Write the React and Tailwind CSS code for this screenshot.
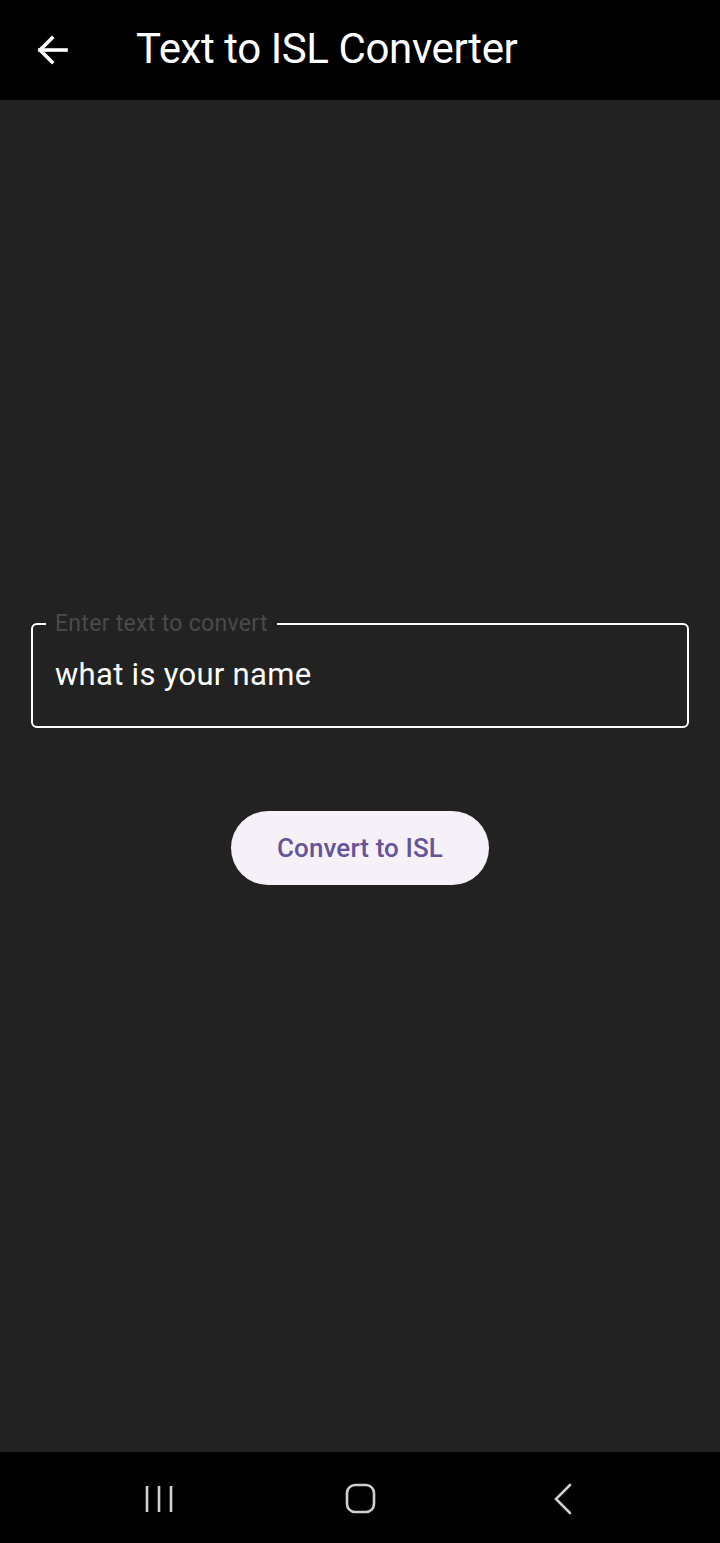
import React from 'react';

// Top app bar with back arrow and title
function AppBar() {
    return (
        <div className="h-[100px] bg-black flex items-center shrink-0">
            <div className="w-[136px] flex items-center pl-[37px]">
                <svg width="32" height="30" viewBox="0 0 32 30" fill="none" stroke="white" strokeWidth="3.6" strokeLinecap="square">
                    <path d="M3 15h26" />
                    <path d="M15 3L3 15l12 12" />
                </svg>
            </div>
            <h1 className="text-[42px] text-white leading-none tracking-[-0.4px] -mt-[3px]">Text to ISL Converter</h1>
        </div>
    );
}

// Android system navigation bar
function NavBar() {
    return (
        <div className="h-[91px] bg-black flex items-center shrink-0 pl-[145px] pt-[2px]">
            <svg width="30" height="30" viewBox="0 0 30 30" fill="none" stroke="#cfcfcf" strokeWidth="2.6">
                <path d="M2 2v26M14 2v26M26 2v26" />
            </svg>
            <svg className="ml-[170px]" width="32" height="32" viewBox="0 0 32 32" fill="none" stroke="#cfcfcf" strokeWidth="2.6">
                <rect x="2" y="2" width="27" height="27" rx="8" />
            </svg>
            <svg className="ml-[176px]" width="20" height="32" viewBox="0 0 20 32" fill="none" stroke="#cfcfcf" strokeWidth="2.6" strokeLinecap="round">
                <path d="M17 2L3 16l14 14" />
            </svg>
        </div>
    );
}

export default function App() {
    return (
        <div className="w-[720px] h-[1543px] flex flex-col bg-[#222222] font-['Roboto',sans-serif]">
            <AppBar />

            <main className="flex-1 flex flex-col items-center pt-[512px] px-[31px]">
                {/* Outlined text field */}
                <fieldset className="w-full h-[116px] border-2 border-white rounded-[6px] pl-[13px] pr-[22px] pb-[10px]">
                    <legend className="px-[9px] text-[23px] leading-[24px] text-[#4a4a4a] tracking-[0.3px]">
                        Enter text to convert
                    </legend>
                    <div className="pt-[23px] pl-[9px] text-[31px] leading-none text-white tracking-[0.3px]">
                        what is your name
                    </div>
                </fieldset>

                <button className="mt-[83px] w-[258px] h-[74px] rounded-full bg-[#f6f1f8] text-[#65549a] text-[26px] font-medium tracking-[0.1px]">
                    Convert to ISL
                </button>
            </main>

            <NavBar />
        </div>
    );
}
